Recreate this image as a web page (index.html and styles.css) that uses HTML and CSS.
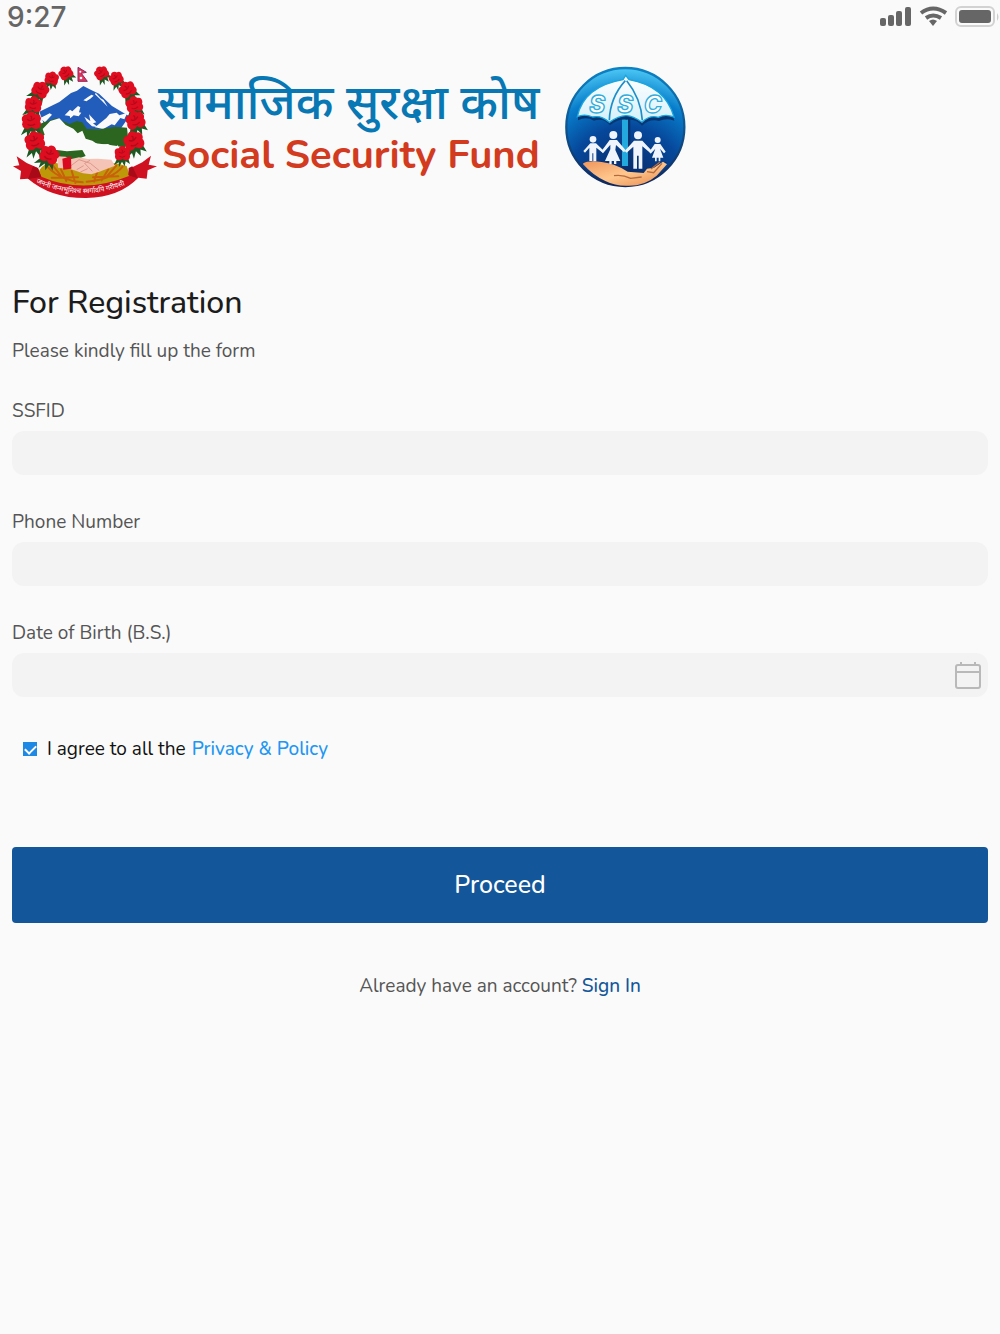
FILE: index.html
```html
<!DOCTYPE html>
<html lang="en">
<head>
    <meta charset="UTF-8">
    <meta name="viewport" content="width=device-width, initial-scale=1.0">
    <title>Social Security Fund - Registration</title>
    <link rel="stylesheet" href="styles.css">
</head>
<body>
    <!-- Status Bar -->
    <div class="status-bar">
        <span class="status-time">9:27</span>
        <svg class="status-icons" viewBox="0 0 120 24" aria-hidden="true">
            <g fill="#666">
                <rect x="0" y="13" width="6" height="8" rx="2"/>
                <rect x="8" y="10" width="6" height="11" rx="2"/>
                <rect x="16" y="6" width="6" height="15" rx="2"/>
                <rect x="25" y="2" width="6" height="19" rx="2"/>
                <path d="M49 16q4-3 8 0l-4 5z"/>
                <rect x="79" y="5" width="32" height="13" rx="3"/>
                <path d="M117 8q3 4 0 8z" fill="#ccc"/>
            </g>
            <g fill="none" stroke="#666" stroke-width="4">
                <path d="M41 8q12-9 25 0M46 13q7-5 15 0"/>
            </g>
            <rect x="76" y="2" width="38" height="19" rx="5" fill="none" stroke="#d2d2d2" stroke-width="2"/>
        </svg>
    </div>

    <!-- Logo Header -->
    <header class="header">
        <svg class="emblem" viewBox="36 48 438 402" role="img" aria-label="Emblem of Nepal">
            <defs>
                <g id="flower">
                    <path d="M-15 14l-10 20 14-8 1 14 9-16 8 14 3-15 13 8-6-19z" fill="#1d5722"/>
                    <g fill="#de0d20">
                        <circle cx="-12" cy="-5" r="11"/>
                        <circle cx="0" cy="-12" r="11"/>
                        <circle cx="12" cy="-6" r="11"/>
                        <circle cx="-10" cy="8" r="12"/>
                        <circle cx="11" cy="8" r="12"/>
                        <circle cx="0" cy="2" r="13"/>
                    </g>
                    <path d="M-10-4q8 7 18-3M-9 8q8 6 18-1M-2-12q5 3 1 8" fill="none" stroke="#b00a1a" stroke-width="3"/>
                </g>
            </defs>
            <path d="M118 185l60-29 35-27 18-7 19-14 22 11 25 12 39 37 30 18 22 13-28 40H138z" fill="#235dbb"/>
            <path d="M194 196l16-17 7 5 17-16 7 4-4 15 7 1-8 11-15-3-10 9-2-7zM250 151l15-11 10-6 6 3-10 9-12 8zM253 200l18 13-4-20 22 24-10 3 14 11-17-2-16-15zM285 232l34-28 10-12 21-4 8 8 24-8-9 20-12-4-17 22-9-3-25 14zM120 205l29-15 7 4-21 23zM287 128l15 17 9 5 12 20-20-20-18-17z" fill="#fafafa"/>
            <path d="M108 226l33-12 28-9 40 17 21-9 17 4 13 20 40 1 45-8 36 3 4 36-10 24-29-6-59-7-28 4-41-26-18-24-38-14-22 16 1 50-22 6z" fill="#2b651f"/>
            <path d="M151 213l27-8 19 20 23 11 13 14 14-8 10 24 20 6 18 12 29-2 18 9 12-5 6 41-105 4-60-21-39-4-32-20-2-22 12-10-6-17z" fill="#fafafa"/>
            <path d="M128 287l36 12 37 5 46-4 10 18-33 12-68-7-33-17z" fill="#2b651f"/>
            <path d="M117 362q16-27 51-23l70 14 61-2 46-12 35 9 9 27-1 25-28 7q-110 26-208-9l-31-11z" fill="#bf9809"/>
            <g fill="none" stroke="#c9600c" stroke-width="6" stroke-linecap="round">
                <path d="M144 352q39 40 104 45M368 350q-32 39-108 45M158 346l28 35M183 358l16 35M215 363l11 36M349 347l-30 34M325 358l-20 33M294 360l-12 35M155 383l79-1M355 379l-76 3"/>
            </g>
            <path d="M172 319l25 1 14 8 26-6 26 5 30-1 41 3 11 18-47 18-24 8-25-3-38-13-37-4z" fill="#f5c4b6"/>
            <path d="M213 347l24-18 34 11 27 22M230 359l21-12M241 366l22-10M270 331l-16 9 23 24" fill="none" stroke="#dd978b" stroke-width="3"/>
            <path d="M187 326l26-7 1 37-24 3z" fill="#d90920"/>
            <use href="#flower" transform="translate(197 69) rotate(-30) scale(.9)"/>
            <use href="#flower" transform="translate(155 85) rotate(15) scale(.9)"/>
            <use href="#flower" transform="translate(121 119) rotate(30) scale(1.1)"/>
            <use href="#flower" transform="translate(100 164) rotate(10) scale(1.1)"/>
            <use href="#flower" transform="translate(94 213) scale(1.25)"/>
            <use href="#flower" transform="translate(104 273) rotate(-10) scale(1.3)"/>
            <use href="#flower" transform="translate(148 314) rotate(25) scale(1.25)"/>
            <use href="#flower" transform="translate(304 69) rotate(-30) scale(.9)"/>
            <use href="#flower" transform="translate(348 85) rotate(-25) scale(.9)"/>
            <use href="#flower" transform="translate(382 119) rotate(-30) scale(1.1)"/>
            <use href="#flower" transform="translate(403 164) rotate(-10) scale(1.1)"/>
            <use href="#flower" transform="translate(406 211) rotate(-15) scale(1.25)"/>
            <use href="#flower" transform="translate(401 273) rotate(-15) scale(1.3)"/>
            <use href="#flower" transform="translate(367 311)"/>
            <path d="M234 52l25 15-15 3 18 24h-28z" fill="#e1345a" stroke="#8b2860" stroke-width="3"/>
            <circle cx="241" cy="65" r="3" fill="#fff"/>
            <circle cx="243" cy="84" r="4" fill="#fff"/>
            <path d="M39 349l19-3-8-27 30 20 34 15 10 26q126 54 263-2l7-25 33-16 26-20-7 27 25 5-28 12-3 25-25-3q-56 58-156 61-106 1-175-58l-24 2 3-25z" fill="#cf1021"/>
            <path d="M84 387l15-38 15 6 10 26zM414 385l-17-36-11 5-1 22z" fill="#a80a17"/>
            <path id="motto" d="M108 398q145 66 294-5" fill="none"/>
            <text class="motto"><textPath href="#motto">जननी जन्मभूमिश्च स्वर्गादपि गरीयसी</textPath></text>
        </svg>

        <div class="brand">
            <div class="brand-nepali" lang="ne">सामाजिक सुरक्षा कोष</div>
            <div class="brand-english">Social Security Fund</div>
        </div>

        <svg class="ssf-logo" viewBox="36 33 375 366" role="img" aria-label="SSF logo">
            <defs>
                <radialGradient id="globe" cx=".5" cy="1" r="1">
                    <stop offset="0" stop-color="#09245c"/>
                    <stop offset=".5" stop-color="#06479a"/>
                    <stop offset=".78" stop-color="#087dcb"/>
                    <stop offset="1" stop-color="#4dc9f5"/>
                </radialGradient>
                <linearGradient id="rim" x2="0" y2="1">
                    <stop offset="0" stop-color="#0c82c4"/>
                    <stop offset="1" stop-color="#11275b"/>
                </linearGradient>
                <linearGradient id="panel" x2="0" y2="1">
                    <stop offset="0" stop-color="#fff"/>
                    <stop offset="1" stop-color="#d5f0fa"/>
                </linearGradient>
                <linearGradient id="hand" x2="1" y2="1">
                    <stop offset="0" stop-color="#ef955c"/>
                    <stop offset=".5" stop-color="#ffc78d"/>
                    <stop offset="1" stop-color="#e88a4c"/>
                </linearGradient>
            </defs>
            <circle cx="226" cy="216" r="177" fill="url(#globe)" stroke="url(#rim)" stroke-width="7"/>
            <path d="M216 180h21v153h-21z" fill="#24a9df"/>
            <path d="M234 188h7v145h-7z" fill="#063572"/>
            <path d="M84 196q25-13 48 1 30-10 48 14 24-20 50-17 28-3 46 18 24-22 51-14 22-10 46-1l-4-14H84z" fill="#063572"/>
            <path d="M82 185q20-91 137-111l8-13 10 13q108 19 135 112-27-10-47 1-26-8-49 15-29-21-47-20-21-1-51 20-24-22-50-16-25-11-46-1z" fill="url(#panel)" stroke="#18a6df" stroke-width="4"/>
            <path d="M226 77q-46 51-48 119M230 77q43 53 47 119" fill="none" stroke="#1c8fcb" stroke-width="5"/>
            <g class="umbrella-text">
                <text x="118" y="174">S</text>
                <text x="202" y="174">S</text>
                <text x="282" y="174">C</text>
            </g>
            <path d="M128 318q-43 16-30 6 49-12 90 5l43 19 47 7 45-28 28-6-41 44q-34 28-91 29-69-7-121-70z" fill="#142a61"/>
            <path d="M98 326q18-11 57-5 42 5 78 29l48 4 10-13 21-3 27-18 12 8-31 34q-35 30-83 30-40 2-71-14-38-18-68-52z" fill="url(#hand)"/>
            <path d="M192 362q25-4 50 8l33-4M291 350l20 3 25-28M303 342l26-20" fill="none" stroke="#b56a40" stroke-width="4"/>
            <g fill="#f0f4fc">
                <circle cx="129" cy="253" r="10"/>
                <path d="M121 265h17l24 23-4 5-19-15v41h-9v-24h-3v23h-9v-40l-13 15-5-5z"/>
                <circle cx="190" cy="240" r="12"/>
                <path d="M179 255h22l26 31-5 6-24-22-2 15 15 33h-12v9h-7v-9h-7v9h-7v-9h-13l16-35v-14l-22 26-5-6z"/>
                <circle cx="264" cy="241" r="12"/>
                <path d="M252 257h25l29 31-5 6-24-20v67h-11v-39h-5v39h-11v-66l-20 18-6-5z"/>
                <circle cx="323" cy="255" r="9"/>
                <path d="M314 267h17l16 23-5 5-12-14 10 27h-9v11h-5v-11h-6v11h-5v-11h-9l10-27-14 15-4-6z"/>
            </g>
        </svg>
    </header>

    <!-- Registration Form -->
    <main class="container">
        <h1>For Registration</h1>
        <p class="subtitle">Please kindly fill up the form</p>

        <form action="#">
            <div class="form-group">
                <label for="ssfid">SSFID</label>
                <input type="text" id="ssfid" name="ssfid" class="form-input">
            </div>
            <div class="form-group">
                <label for="phone">Phone Number</label>
                <input type="tel" id="phone" name="phone" class="form-input">
            </div>
            <div class="form-group">
                <label for="dob">Date of Birth (B.S.)</label>
                <div class="date-field">
                    <input type="text" id="dob" name="dob" class="form-input">
                    <svg class="calendar-icon" viewBox="0 0 26 28" aria-hidden="true">
                        <path d="M3 4h20q2 0 2 2v19q0 2-2 2H3q-2 0-2-2V6q0-2 2-2zM1 11h24M6 1v4M20 1v4" fill="none" stroke="#b9b9b9" stroke-width="2"/>
                    </svg>
                </div>
            </div>

            <div class="agree">
                <input type="checkbox" id="agree" name="agree" checked>
                <label for="agree">I agree to all the</label>
                <a href="#">Privacy &amp; Policy</a>
            </div>

            <button type="submit" class="proceed-btn">Proceed</button>
        </form>

        <p class="sign-in">Already have an account? <a href="#">Sign In</a></p>
    </main>
</body>
</html>
```
FILE: styles.css
```css
/* General Styles */
* {
    box-sizing: border-box;
}

body {
    margin: 0;
    font-family: Nunito, 'Noto Sans', sans-serif;
    font-size: 19px;
    line-height: 26px;
    background-color: #fafafa;
    color: #555;
}

a {
    text-decoration: none;
}

/* Status Bar */
.status-bar {
    display: flex;
    justify-content: space-between;
    align-items: center;
    height: 34px;
    padding-left: 7px;
}

.status-time {
    font-family: Inter, sans-serif;
    font-size: 28px;
    font-weight: 500;
    color: #666;
}

.status-icons {
    width: 120px;
    height: 24px;
}

/* Logo Header */
.header {
    display: flex;
    align-items: flex-start;
    padding: 32px 12px 0;
}

.emblem {
    width: 146px;
    height: 134px;
}

.motto {
    font-family: 'Noto Sans', sans-serif;
    font-size: 21px;
    fill: #fff;
}

.brand {
    width: 404px;
    padding-top: 5px;
    white-space: nowrap;
}

.brand-nepali {
    font-family: 'Noto Sans', sans-serif;
    font-size: 48px;
    font-weight: 500;
    line-height: 60px;
    color: #0878b4;
}

.brand-english {
    padding-left: 4px;
    font-size: 40px;
    font-weight: 700;
    line-height: 48px;
    color: #d23b20;
}

.ssf-logo {
    width: 125px;
    height: 122px;
}

.umbrella-text {
    font-family: Inter, sans-serif;
    font-size: 72px;
    font-style: italic;
    font-weight: 800;
    fill: #fff;
    stroke: #30addd;
    stroke-width: 4px;
}

/* Registration Form */
.container {
    padding: 81px 12px 0;
}

h1 {
    margin: 0;
    font-size: 32px;
    font-weight: 500;
    line-height: 44px;
    color: #1c1c1c;
}

.subtitle {
    margin: 13px 0 34px;
}

.form-group {
    margin-bottom: 34px;
}

.form-group label {
    display: block;
    margin-bottom: 7px;
}

.form-input {
    display: block;
    width: 100%;
    height: 44px;
    padding: 0 12px;
    border: none;
    border-radius: 12px;
    background-color: #f3f3f3;
    font: inherit;
}

.date-field {
    position: relative;
}

.calendar-icon {
    position: absolute;
    top: 8px;
    right: 7px;
    width: 26px;
    height: 28px;
}

.agree {
    display: flex;
    align-items: center;
    padding: 5px 10px 0;
    color: #111;
}

.agree input {
    display: flex;
    justify-content: center;
    appearance: none;
    width: 14px;
    height: 14px;
    margin: 0 10px 0 1px;
    border: 1px solid #1e88e5;
}

.agree input:checked {
    background-color: #1e88e5;
}

/* Check mark */
.agree input:checked::before {
    content: '';
    width: 9px;
    height: 5px;
    margin-top: 2px;
    border: solid #fff;
    border-width: 0 0 2px 2px;
    transform: rotate(-45deg);
}

.agree label {
    margin-right: 6px;
}

.agree a {
    color: #2196f3;
    font-weight: 500;
}

.proceed-btn {
    width: 100%;
    height: 76px;
    margin-top: 85px;
    border: none;
    border-radius: 4px;
    background-color: #135699;
    color: #fff;
    font-family: inherit;
    font-size: 25px;
    font-weight: 500;
    cursor: pointer;
}

.sign-in {
    margin: 50px 0 0;
    text-align: center;
}

.sign-in a {
    color: #135699;
    font-weight: 500;
}
```
